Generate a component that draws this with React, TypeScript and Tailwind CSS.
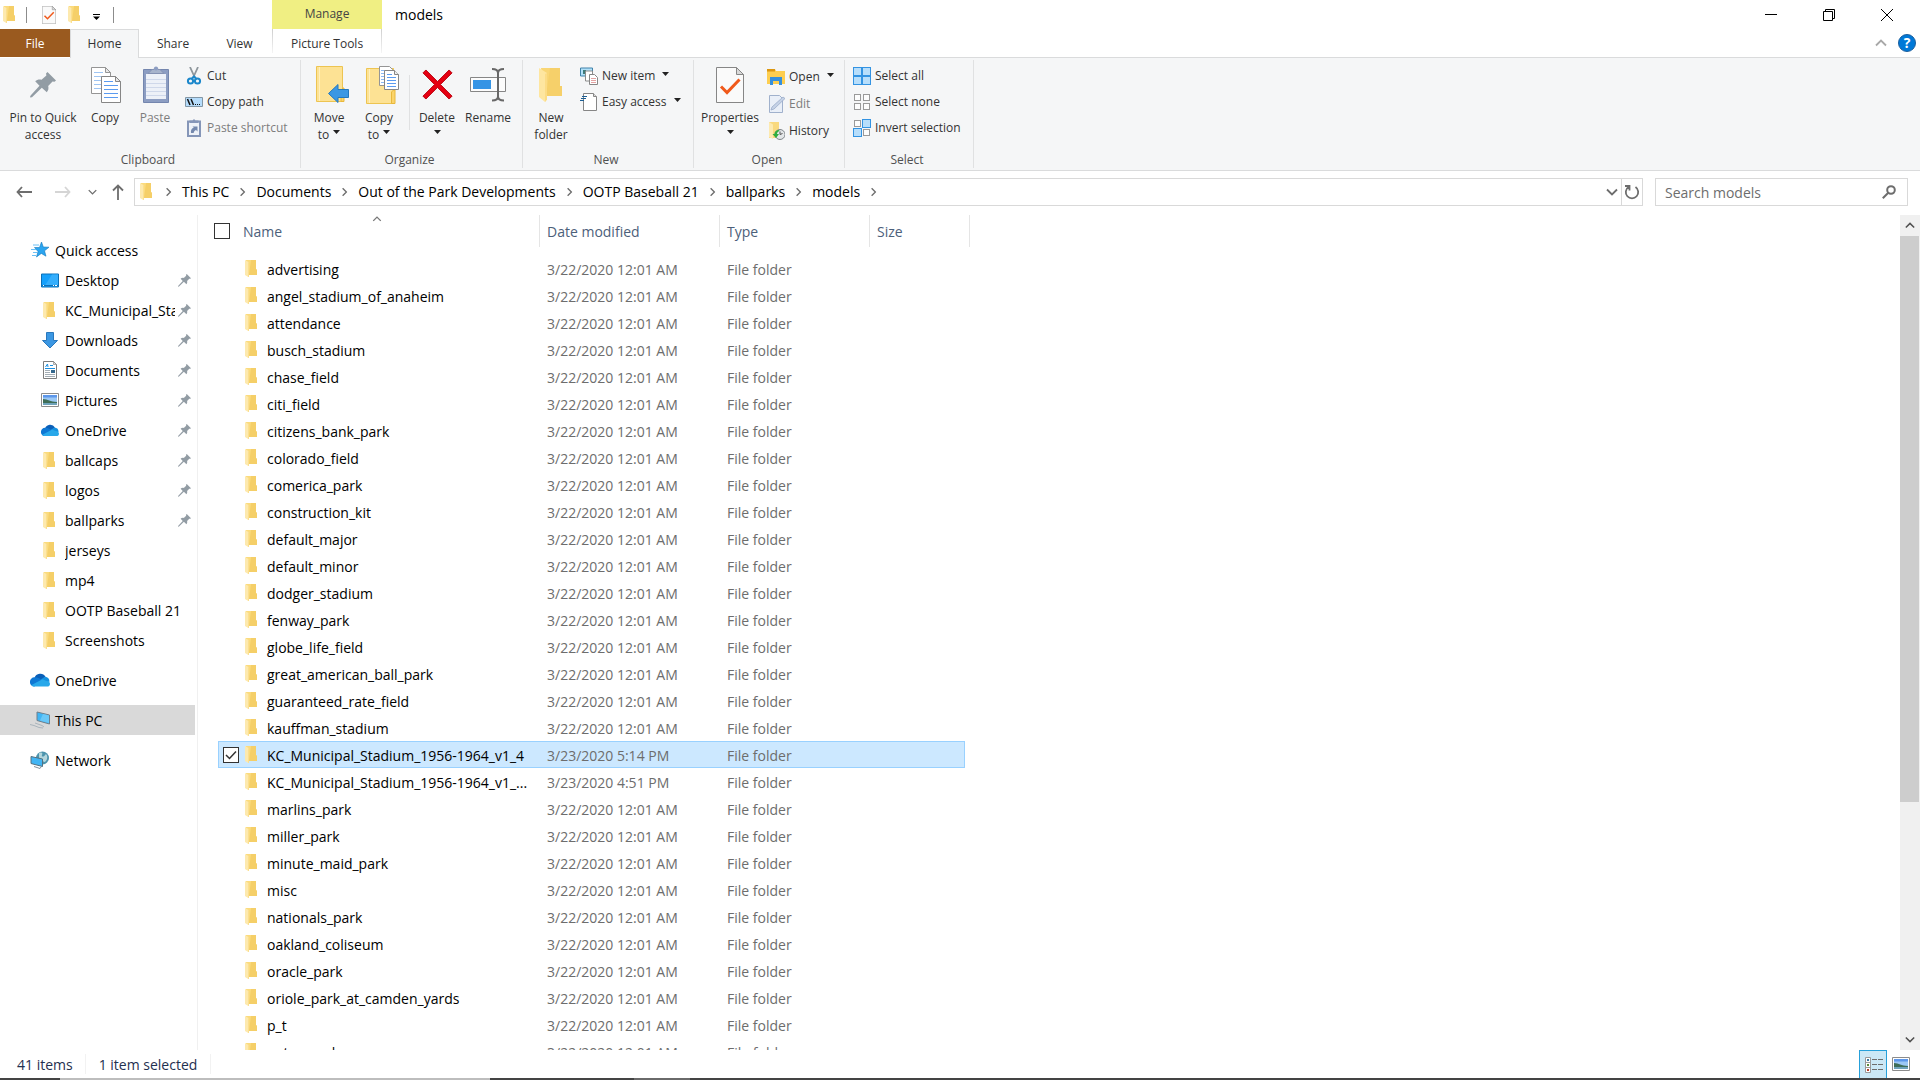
import type { ComponentType, ReactNode } from "react";

type IconProps = { className?: string };

type QuickItem = {
  label: string;
  icon: ComponentType<IconProps>;
  pinned?: boolean;
};

type FileRow = {
  name: string;
  modified: string;
  selected?: boolean;
};

/* ---------- small icons ---------- */

function FolderIcon({ className = "" }: IconProps) {
  return (
    <svg className={`h-[17px] w-3 shrink-0 ${className}`} viewBox="0 0 12 17">
      <path d="M1 0h10v9.5h1V15H1z" fill="#fbdb7d" />
      <path d="M6 0h5v9.5h1V15H4z" fill="#f5cf68" />
      <path d="M0 0l4 2.2V17l-1.2-.3L0 15z" fill="#fde9ae" />
      <path d="M4 2.2V17l-1-.3V2z" fill="#fbdf8f" />
    </svg>
  );
}

function CheckPageIcon({ className = "" }: IconProps) {
  return (
    <svg className={className} viewBox="0 0 28 36">
      <path d="M.5.5h20l7 7v28H.5z" fill="#fafafa" stroke="#868686" />
      <path d="M20.5.5v7h7z" fill="#d9d9d9" stroke="#868686" />
      <path d="M5 19.500l6 6L23.500 12.500" fill="none" stroke="#f0591b" strokeWidth="3" />
    </svg>
  );
}

function PinIcon({ className = "" }: IconProps) {
  return (
    <svg className={className} viewBox="0 0 26 26">
      <path
        d="M17.500 0L26 8.500l-1.500 1.200-2-.2-4.300 4.600c.6 2.600.2 4.400-1.400 6.200l-5-4.600L2 25.200.3 25.600 0 25l.6-1.400L9.500 13.800 5.200 9.300c1.800-1.600 3.900-2.100 6.300-1.500L16.400 3.600 16 1.500z"
        fill="#929ca4"
      />
    </svg>
  );
}

function Caret({ className = "" }: IconProps) {
  return (
    <svg className={`inline-block h-1 w-[7px] shrink-0 ${className}`} viewBox="0 0 7 4">
      <path d="M0 0h7L3.500 4z" fill="#222" />
    </svg>
  );
}

function Chevron({ className = "" }: IconProps) {
  return (
    <svg className={`shrink-0 ${className}`} viewBox="0 0 12 8" fill="none" stroke="currentColor">
      <path d="M1 1.500l5 5 5-5" strokeWidth="1.800" />
    </svg>
  );
}

function StarIcon({ className = "" }: IconProps) {
  return (
    <svg className={className} viewBox="0 0 18 16">
      <path d="M10.500 0l1.800 5 5.700.2-4.500 3.600 1.500 5.400-4.700-2.800L5.500 15l1.500-5.500-3.500-4h5z" fill="#2ba5f0" stroke="#1379bd" strokeWidth=".6" />
      <path d="M2 3h6M0 7.500h5M2 10.500h4M1 13.500h4" stroke="#6cc0f5" />
    </svg>
  );
}

function DesktopIcon({ className = "" }: IconProps) {
  return (
    <svg className={className} viewBox="0 0 18 18">
      <path d="M.5 3h17v13H.5z" fill="#15a0fb" stroke="#0c70b8" />
      <path d="M11 3.500h6v11H4z" fill="#35aefc" />
      <path d="M1 14.500h16" stroke="#0c70b8" />
      <path d="M2 14.500h1m9 0h1m1 0h2" stroke="#fff" />
    </svg>
  );
}

function DownloadIcon({ className = "" }: IconProps) {
  return (
    <svg className={className} viewBox="0 0 18 18">
      <path d="M5.500 1.500h7v8h4L9 17 1.500 9.500h4z" fill="#3b97e3" stroke="#2a78bd" />
    </svg>
  );
}

function DocumentIcon({ className = "" }: IconProps) {
  return (
    <svg className={className} viewBox="0 0 18 18">
      <path d="M2.500.5h10l3 3v14h-13z" fill="#fff" stroke="#7d7d7d" />
      <path d="M12.500.5v3h3z" fill="#ddd" stroke="#7d7d7d" strokeWidth=".6" />
      <path d="M4.500 6L6.500 3 7 6M9 4.500h3M4 7.500h10" fill="none" stroke="#1b8ee0" />
      <path d="M4 9.500h5M4 11.500h5M4 13.500h10M4 15.500h10" stroke="#a3adb5" />
      <path d="M10 9h4v3h-4z" fill="#35688e" />
    </svg>
  );
}

function PictureIcon({ className = "" }: IconProps) {
  return (
    <svg className={className} viewBox="0 0 18 14">
      <path d="M.5.5h17v13H.5z" fill="#fff" stroke="#8c8c8c" />
      <path d="M2 2h14v10H2z" fill="#9cc8f5" />
      <path d="M2 2h14v2.500H2z" fill="#5d97ea" />
      <path d="M2 6c5 .5 7 2.500 14 3v1.500H2z" fill="#3f6e58" />
      <path d="M2 10h14v2H2z" fill="#6fa3bb" />
    </svg>
  );
}

function CloudIcon({ className = "" }: IconProps) {
  return (
    <svg className={className} viewBox="0 0 20 14">
      <path d="M4.500 5A6 6 0 0 1 15.500 3.800L11 8z" fill="#0a5fb8" />
      <path d="M4.500 13.500A4.400 4.400 0 0 1 4.500 4.300C7 4 9 5 12 7z" fill="#0f78d4" />
      <path d="M15 3.800a5 5 0 0 1 4.500 5L12 9.500 11 6.300z" fill="#1490df" />
      <path d="M1.500 12L12.500 6.200c1.700.6 3 1.600 4 1.700 2 0 3.500 1.300 3.500 3s-1.300 2.600-3 2.600H4.500C3.200 13.500 2 13 1.500 12z" fill="#28a8ea" />
    </svg>
  );
}

function ThisPcIcon({ className = "" }: IconProps) {
  return (
    <svg className={className} viewBox="0 0 20 18">
      <path d="M7 1l12.500 3v9L7 9.500z" fill="#41b5f4" stroke="#6f7f8b" />
      <path d="M13 3l6 1.500v7.500L10 9.500z" fill="#69c8f8" />
      <path d="M0 13.500l4 1 5 2M5 12l7 2.500 2 1.500M9 16.500l4 .5" fill="none" stroke="#a9b4bc" />
    </svg>
  );
}

function NetworkIcon({ className = "" }: IconProps) {
  return (
    <svg className={className} viewBox="0 0 20 18">
      <circle cx="12.500" cy="7" r="6.500" fill="#4d94ad" />
      <path d="M9 2c3-1 4 0 3 2s2 2 3 0 3 1 2 4-3 4-4 2-4-1-4-4z" fill="#b4d6dc" />
      <path d="M1 5.500l11.500 2.500v7.500L1 12.500z" fill="#41b5f4" stroke="#54707f" />
      <path d="M4 15.500l6 2 1-1.500" fill="none" stroke="#83919b" />
    </svg>
  );
}

/* ---------- ribbon icons ---------- */

function CopyIcon({ className = "" }: IconProps) {
  return (
    <svg className={className} viewBox="0 0 30 36">
      <path d="M.5.500h14l5 5v21H.5z" fill="#fff" stroke="#959595" />
      <path d="M14.500.5v5h5z" fill="#e8e8e8" stroke="#959595" />
      <path d="M3 5.500h9M3 9.500h13M3 13.500h13M3 17.500h13M3 21.500h13" stroke="#9fc5f3" />
      <path d="M10.500 9.500h14l5 5v21h-19z" fill="#fff" stroke="#868686" />
      <path d="M24.500 9.500v5h5z" fill="#e8e8e8" stroke="#868686" />
      <path d="M13 14.500h9M13 18.500h14M13 22.500h14M13 26.500h14M13 30.500h14" stroke="#5b9bf0" />
    </svg>
  );
}

function PasteIcon({ className = "" }: IconProps) {
  return (
    <svg className={className} viewBox="0 0 26 37">
      <path d="M.5 3.500h25v33H.5z" fill="#8c9dc2" stroke="#7486ae" />
      <path d="M3 8h20v25H3z" fill="#edf1f8" />
      <path d="M3 13.500h20M3 17.500h20M3 21.500h20M3 25.500h20M3 29.500h20" stroke="#cfd8ea" />
      <path d="M5 7.500l4-4h2a2 2 0 0 1 4 0h2l4 4z" fill="#a7b4cc" stroke="#8492b3" />
      <circle cx="13" cy="2.500" r="2" fill="#8c9dc2" />
    </svg>
  );
}

function CutIcon({ className = "" }: IconProps) {
  return (
    <svg className={className} viewBox="0 0 18 18" fill="none">
      <path d="M5 0l5 11M13 0L8 11" stroke="#8e969c" strokeWidth="1.800" />
      <circle cx="5.500" cy="14" r="2.600" stroke="#1b87cb" strokeWidth="2" />
      <circle cx="12.500" cy="14" r="2.600" stroke="#1b87cb" strokeWidth="2" />
      <path d="M7 11.500l2-2 2 2" stroke="#1b87cb" strokeWidth="2" />
    </svg>
  );
}

function CopyPathIcon({ className = "" }: IconProps) {
  return (
    <svg className={className} viewBox="0 0 18 18" fill="none">
      <path d="M.5 4.500h17v9H.5z" fill="#b5dcfb" stroke="#8296a5" />
      <path d="M2.500 6l2.500 6M6 6l2.500 6" stroke="#111" strokeWidth="1.500" />
      <path d="M10 11.500h1m1 0h1m1 0h1" stroke="#111" />
    </svg>
  );
}

function PasteShortcutIcon({ className = "" }: IconProps) {
  return (
    <svg className={className} viewBox="0 0 18 18" fill="none">
      <path d="M3 2.500h12v14.500H3z" fill="#eef2f8" stroke="#8596b8" strokeWidth="2" />
      <path d="M4.500 4V1.500h3L9 0l1.500 1.500h3V4z" fill="#8596b8" />
      <path d="M6 14c-.5-3 .8-4.800 2.800-5.200L7.500 7.500h5v5L11 11c-1.500.5-2.200 1.500-2.300 3z" fill="#7489ae" />
    </svg>
  );
}

function MoveToIcon({ className = "" }: IconProps) {
  return (
    <svg className={className} viewBox="0 0 34 37">
      <path d="M.5.5h26v35H.5z" fill="#fde294" stroke="#edc451" />
      <path d="M3.500 1v34" stroke="#fff0bd" />
      <path d="M25 35.500V24l2-2h1v13.500z" fill="#fbd46b" stroke="#e8b83c" />
      <path d="M12.500 27.500L22 18.500v5h10.500v8H22v5z" fill="#3b97e3" stroke="#2478bd" />
    </svg>
  );
}

function CopyToIcon({ className = "" }: IconProps) {
  return (
    <svg className={className} viewBox="0 0 34 38">
      <path d="M.5 2.500h27v35H.5z" fill="#fde294" stroke="#edc451" />
      <path d="M3.500 3v34" stroke="#fff0bd" />
      <path d="M25.500 37.500V26l2-2h1.500v13.500z" fill="#fbd46b" stroke="#e8b83c" />
      <path d="M13.500.5h10l3 3v16h-13z" fill="#fff" stroke="#959595" />
      <path d="M15 4.500h4M15 7.500h4M15 10.500h4M15 13.500h4M15 16.500h4" stroke="#8bb8f2" />
      <path d="M18.500 4.500h10l4 4v15h-14z" fill="#fff" stroke="#868686" />
      <path d="M28.500 4.500v4h4" fill="#eee" stroke="#868686" />
      <path d="M21 8.500h5M21 11.500h9M21 14.500h9M21 17.500h9M21 20.500h9" stroke="#5b9bf0" />
    </svg>
  );
}

function DeleteIcon({ className = "" }: IconProps) {
  return (
    <svg className={className} viewBox="0 0 32 32">
      <path
        d="M1 4l3-3 12 12L28 1l3 3-12 12 12 12-3 3-12-12L4 31l-3-3 12-12z"
        fill="#e60012"
        stroke="#b8000d"
      />
    </svg>
  );
}

function RenameIcon({ className = "" }: IconProps) {
  return (
    <svg className={className} viewBox="0 0 36 34" fill="none">
      <path d="M.5 9.500h35v14H.5z" fill="#fcfcfc" stroke="#868686" />
      <path d="M3 12h18v9H3z" fill="#3594e5" />
      <path d="M28 4v26" stroke="#686868" strokeWidth="2" />
      <path d="M22 1c4 0 6 1 6 4 0-3 2-4 6-4M22 32.500c4 0 6-1 6-4 0 3 2 4 6 4" stroke="#686868" strokeWidth="2" />
    </svg>
  );
}

function NewFolderIcon({ className = "" }: IconProps) {
  return (
    <svg className={className} viewBox="0 0 26 36">
      <path d="M3 1h19v18h2v10H6z" fill="#f9d675" />
      <path d="M12 1h10v18h2v10H8z" fill="#f6d06a" />
      <path d="M1 1l8 5v26.500L7 35l-6-5z" fill="#fee6a0" />
      <path d="M9 6v26.500L7 35V7z" fill="#fcdc86" />
    </svg>
  );
}

function NewItemIcon({ className = "" }: IconProps) {
  return (
    <svg className={className} viewBox="0 0 18 18">
      <path d="M.5 1h12v8H.5z" fill="#b2e1f9" stroke="#4183ab" />
      <path d="M3 3h3v4H3z" fill="#3e7c7a" />
      <path d="M5.500 4h7v10h-7z" fill="#fff" stroke="#8b8b8b" />
      <path d="M9.500 7.500h5l3 3v7h-8z" fill="#fff" stroke="#868686" />
      <path d="M11 11.500h5M11 13.500h5M11 15.500h5" stroke="#e3a3a3" />
    </svg>
  );
}

function EasyAccessIcon({ className = "" }: IconProps) {
  return (
    <svg className={className} viewBox="0 0 18 18">
      <path d="M3.500.5h10l3 3v14h-13z" fill="#fff" stroke="#868686" />
      <path d="M13.500.5v3h3" fill="#ddd" stroke="#868686" />
      <path d="M2 3.500h5M1 5.500h5M0 7.500h4" stroke="#1d5f94" strokeWidth="1.200" />
    </svg>
  );
}

function OpenIcon({ className = "" }: IconProps) {
  return (
    <svg className={className} viewBox="0 0 18 18">
      <path d="M0 1h8l1 2h9v13H0z" fill="#fdce50" />
      <path d="M0 1h8v2.500H0z" fill="#dc9711" />
      <path d="M3 17V9h12v8h-3v-4H6v4z" fill="#358fdc" />
    </svg>
  );
}

function EditIcon({ className = "" }: IconProps) {
  return (
    <svg className={className} viewBox="0 0 18 18">
      <path d="M2.500.5h10l3 3v14h-13z" fill="#e9eff8" stroke="#a0b1cc" />
      <path d="M4 15l1-3L16 2l2 1.500L7 14z" fill="#c5d2e6" stroke="#9aacca" strokeWidth=".8" />
    </svg>
  );
}

function HistoryIcon({ className = "" }: IconProps) {
  return (
    <svg className={className} viewBox="0 0 18 18">
      <path d="M2 0h10v16H2z" fill="#f9d97f" />
      <path d="M2 0l4 2.500V17l-4-2z" fill="#fdeab0" />
      <circle cx="13" cy="12.500" r="5" fill="#e3e6e8" stroke="#7f8589" />
      <path d="M13 9.500v3l2.500-1" fill="none" stroke="#555" />
      <path d="M12 8c-3 0-4.500 2-4.500 4H5.500l3.500 4 3-4h-2c0-1.500 1-2.500 2.500-3z" fill="#2fae3f" />
    </svg>
  );
}

function Tile({ x, y, on }: { x: number; y: number; on: boolean }) {
  return on ? (
    <rect x={x - 0.5} y={y - 0.5} width="8" height="8" fill="#b7defb" stroke="#3393e2" />
  ) : (
    <rect x={x + 0.5} y={y + 0.5} width="6" height="6" fill="#fdfdfd" stroke="#9a9a9a" />
  );
}

function TilesIcon({ on, className = "" }: IconProps & { on: boolean[] }) {
  return (
    <svg className={className} viewBox="0 0 18 18">
      <Tile x={1} y={1} on={on[0]} />
      <Tile x={10} y={1} on={on[1]} />
      <Tile x={1} y={10} on={on[2]} />
      <Tile x={10} y={10} on={on[3]} />
    </svg>
  );
}

const SelectAllIcon = (props: IconProps) => <TilesIcon {...props} on={[true, true, true, true]} />;
const SelectNoneIcon = (props: IconProps) => <TilesIcon {...props} on={[false, false, false, false]} />;
const InvertIcon = (props: IconProps) => <TilesIcon {...props} on={[false, true, true, false]} />;

/* ---------- data ---------- */

const quickItems: QuickItem[] = [
  { label: "Desktop", icon: DesktopIcon, pinned: true },
  { label: "KC_Municipal_Stadium", icon: FolderIcon, pinned: true },
  { label: "Downloads", icon: DownloadIcon, pinned: true },
  { label: "Documents", icon: DocumentIcon, pinned: true },
  { label: "Pictures", icon: PictureIcon, pinned: true },
  { label: "OneDrive", icon: CloudIcon, pinned: true },
  { label: "ballcaps", icon: FolderIcon, pinned: true },
  { label: "logos", icon: FolderIcon, pinned: true },
  { label: "ballparks", icon: FolderIcon, pinned: true },
  { label: "jerseys", icon: FolderIcon },
  { label: "mp4", icon: FolderIcon },
  { label: "OOTP Baseball 21", icon: FolderIcon },
  { label: "Screenshots", icon: FolderIcon },
];

const crumbs = ["This PC", "Documents", "Out of the Park Developments", "OOTP Baseball 21", "ballparks", "models"];

const midnight = "3/22/2020 12:01 AM";

const files: FileRow[] = [
  { name: "advertising", modified: midnight },
  { name: "angel_stadium_of_anaheim", modified: midnight },
  { name: "attendance", modified: midnight },
  { name: "busch_stadium", modified: midnight },
  { name: "chase_field", modified: midnight },
  { name: "citi_field", modified: midnight },
  { name: "citizens_bank_park", modified: midnight },
  { name: "colorado_field", modified: midnight },
  { name: "comerica_park", modified: midnight },
  { name: "construction_kit", modified: midnight },
  { name: "default_major", modified: midnight },
  { name: "default_minor", modified: midnight },
  { name: "dodger_stadium", modified: midnight },
  { name: "fenway_park", modified: midnight },
  { name: "globe_life_field", modified: midnight },
  { name: "great_american_ball_park", modified: midnight },
  { name: "guaranteed_rate_field", modified: midnight },
  { name: "kauffman_stadium", modified: midnight },
  { name: "KC_Municipal_Stadium_1956-1964_v1_4", modified: "3/23/2020 5:14 PM", selected: true },
  { name: "KC_Municipal_Stadium_1956-1964_v1_...", modified: "3/23/2020 4:51 PM" },
  { name: "marlins_park", modified: midnight },
  { name: "miller_park", modified: midnight },
  { name: "minute_maid_park", modified: midnight },
  { name: "misc", modified: midnight },
  { name: "nationals_park", modified: midnight },
  { name: "oakland_coliseum", modified: midnight },
  { name: "oracle_park", modified: midnight },
  { name: "oriole_park_at_camden_yards", modified: midnight },
  { name: "p_t", modified: midnight },
  { name: "petco_park", modified: midnight },
];

/* ---------- title bar and ribbon ---------- */

function TitleBar() {
  return (
    <header className="flex h-[29px] items-stretch">
      <div className="flex w-[272px] items-center pl-[3px]">
        <FolderIcon />
        <span className="ml-[11px] h-4 w-px bg-[#8c8c8c]" />
        <button aria-label="Properties" className="ml-[15px]">
          <CheckPageIcon className="h-[18px] w-[14px]" />
        </button>
        <button aria-label="New folder" className="ml-3">
          <FolderIcon />
        </button>
        <button aria-label="Customize Quick Access Toolbar" className="ml-[13px] mt-1">
          <svg className="h-[6px] w-[7px]" viewBox="0 0 7 6">
            <path d="M0 0h7v1H0zM0 2.500h7L3.500 6z" fill="#000" />
          </svg>
        </button>
        <span className="ml-[13px] h-4 w-px bg-[#8c8c8c]" />
      </div>
      <div className="flex w-[110px] items-center justify-center bg-[#f0ef83] pb-px text-[12px] text-[#444]">Manage</div>
      <h1 className="flex flex-1 items-center pl-[13px] text-[14px] text-black">models</h1>
      <div className="flex items-center gap-[46px] pr-[27px]">
        <button aria-label="Minimize">
          <svg className="size-3" viewBox="0 0 12 12">
            <path d="M0 5.500h12" stroke="#000" />
          </svg>
        </button>
        <button aria-label="Restore">
          <svg className="size-3" viewBox="0 0 12 12" fill="none" stroke="#000">
            <path d="M.5 2.500h9v9h-9zM2.500 2.500v-2h9v9h-2" />
          </svg>
        </button>
        <button aria-label="Close">
          <svg className="size-3" viewBox="0 0 12 12">
            <path d="M0 0l12 12M12 0L0 12" stroke="#000" />
          </svg>
        </button>
      </div>
    </header>
  );
}

function RibbonTabs() {
  return (
    <nav className="flex h-[29px] text-[12px] text-[#333]">
      <button className="mb-px w-[70px] bg-[#9a5a1f] pt-px text-white">File</button>
      <button className="w-[69px] border border-b-0 border-[#dadbdc] bg-[#f5f6f7]">Home</button>
      <button className="w-[68px] border-b border-[#dadbdc] pt-[2px]">Share</button>
      <button className="w-[65px] border-b border-[#dadbdc] pt-[2px]">View</button>
      <div className="flex w-[110px] border-b border-[#dadbdc]">
        <span className="mb-1 w-px bg-linear-to-b from-[#cfcfcf] to-[#f4f4f4]" />
        <button className="flex-1 pt-[2px]">Picture Tools</button>
        <span className="mb-1 w-px bg-linear-to-b from-[#cfcfcf] to-[#f4f4f4]" />
      </div>
      <div className="flex flex-1 items-center justify-end gap-[11px] border-b border-[#dadbdc] pr-1">
        <button aria-label="Collapse ribbon" className="text-[#a8a8a8]">
          <Chevron className="h-2 w-3 rotate-180" />
        </button>
        <button
          aria-label="Help"
          className="flex size-[18px] items-center justify-center rounded-full border border-[#1b5f9e] bg-[#0078d7] text-[14px] leading-none font-bold text-white"
        >
          ?
        </button>
      </div>
    </nav>
  );
}

function RibbonGroup({ title, className = "", children }: { title: string; className?: string; children: ReactNode }) {
  return (
    <section className={`my-[2px] flex flex-col border-r border-[#e0e1e2] ${className}`}>
      <div className="flex flex-1 items-start">{children}</div>
      <h2 className="h-4 pr-1 text-center leading-4 text-[#505050]">{title}</h2>
    </section>
  );
}

function LargeButton({
  icon,
  lines,
  caret,
  disabled,
  className = "",
}: {
  icon: ReactNode;
  lines: string[];
  caret?: boolean;
  disabled?: boolean;
  className?: string;
}) {
  return (
    <button disabled={disabled} className={`flex flex-col items-center ${disabled ? "text-[#7d7d7d]" : ""} ${className}`}>
      <span className="flex h-[49px] items-center justify-center">{icon}</span>
      <span className="leading-[17px] whitespace-nowrap">{lines[0]}</span>
      <span className="flex h-[17px] items-center gap-1 leading-[17px]">
        {lines[1]}
        {caret && <Caret className="-mt-[5px]" />}
      </span>
    </button>
  );
}

function SmallButton({
  icon: Icon,
  label,
  caret,
  disabled,
}: {
  icon: ComponentType<IconProps>;
  label: string;
  caret?: boolean;
  disabled?: boolean;
}) {
  return (
    <button
      disabled={disabled}
      className={`flex h-[26px] items-center gap-1 whitespace-nowrap ${disabled ? "text-[#7d7d7d]" : ""}`}
    >
      <Icon className="size-[18px]" />
      {label}
      {caret && <Caret className="-mt-1 ml-[3px]" />}
    </button>
  );
}

function Ribbon() {
  return (
    <div className="flex h-[113px] border-b border-[#dadbdc] bg-[#f5f6f7] text-[12px] text-[#333]">
      <RibbonGroup title="Clipboard" className="w-[301px]">
        <LargeButton className="ml-[6px] w-[74px]" icon={<PinIcon className="size-[26px]" />} lines={["Pin to Quick", "access"]} />
        <LargeButton className="w-[50px]" icon={<CopyIcon className="ml-px h-9 w-[30px]" />} lines={["Copy"]} />
        <LargeButton className="w-[50px]" disabled icon={<PasteIcon className="ml-px h-[37px] w-[26px]" />} lines={["Paste"]} />
        <div className="mt-[3px] ml-[5px]">
          <SmallButton icon={CutIcon} label="Cut" />
          <SmallButton icon={CopyPathIcon} label="Copy path" />
          <SmallButton icon={PasteShortcutIcon} label="Paste shortcut" disabled />
        </div>
      </RibbonGroup>
      <RibbonGroup title="Organize" className="w-[222px]">
        <LargeButton className="ml-[3px] w-[50px]" caret icon={<MoveToIcon className="ml-2 h-[37px] w-[34px]" />} lines={["Move", "to"]} />
        <LargeButton className="w-[50px]" caret icon={<CopyToIcon className="ml-2 h-[38px] w-[34px]" />} lines={["Copy", "to"]} />
        <span className="mt-[15px] mr-[2px] ml-[5px] h-[55px] w-px bg-[#e0e1e2]" />
        <LargeButton className="w-[50px]" caret icon={<DeleteIcon className="size-[31px]" />} lines={["Delete", ""]} />
        <LargeButton className="w-[52px]" icon={<RenameIcon className="h-[34px] w-9" />} lines={["Rename"]} />
      </RibbonGroup>
      <RibbonGroup title="New" className="w-[171px]">
        <LargeButton className="ml-[3px] w-[50px]" icon={<NewFolderIcon className="h-9 w-[26px]" />} lines={["New", "folder"]} />
        <div className="mt-[3px] ml-1">
          <SmallButton icon={NewItemIcon} label="New item" caret />
          <SmallButton icon={EasyAccessIcon} label="Easy access" caret />
        </div>
      </RibbonGroup>
      <RibbonGroup title="Open" className="w-[151px]">
        <LargeButton className="ml-[3px] w-[66px]" caret icon={<CheckPageIcon className="h-9 w-7" />} lines={["Properties", ""]} />
        <div className="mt-1 ml-1 flex flex-col gap-px">
          <SmallButton icon={OpenIcon} label="Open" caret />
          <SmallButton icon={EditIcon} label="Edit" disabled />
          <SmallButton icon={HistoryIcon} label="History" />
        </div>
      </RibbonGroup>
      <RibbonGroup title="Select" className="w-[129px]">
        <div className="mt-[3px] ml-2">
          <SmallButton icon={SelectAllIcon} label="Select all" />
          <SmallButton icon={SelectNoneIcon} label="Select none" />
          <SmallButton icon={InvertIcon} label="Invert selection" />
        </div>
      </RibbonGroup>
    </div>
  );
}

/* ---------- address bar ---------- */

function AddressBar() {
  return (
    <div className="flex h-11 items-center pr-3 pb-[2px] text-[#6d6d6d]">
      <div className="flex w-[134px] items-center pl-4">
        <button aria-label="Back">
          <svg className="h-3 w-4" viewBox="0 0 16 12" fill="none" stroke="currentColor" strokeWidth="1.800">
            <path d="M16 6H1.500M6 1L1.500 6 6 11" />
          </svg>
        </button>
        <button aria-label="Forward" disabled className="ml-[23px] text-[#d5d5d5]">
          <svg className="h-3 w-4" viewBox="0 0 16 12" fill="none" stroke="currentColor" strokeWidth="1.800">
            <path d="M0 6h14.500M10 1l4.500 5L10 11" />
          </svg>
        </button>
        <button aria-label="Recent locations" className="ml-[17px]">
          <Chevron className="h-[6px] w-[9px]" />
        </button>
        <button aria-label="Up" className="ml-[15px]">
          <svg className="h-4 w-3" viewBox="0 0 12 16" fill="none" stroke="currentColor" strokeWidth="1.800">
            <path d="M6 16V1.500M1 6.500l5-5 5 5" />
          </svg>
        </button>
      </div>
      <div className="flex h-7 flex-1 items-stretch border border-[#d9d9d9]">
        <div className="flex flex-1 items-center pb-px pl-[5px]">
          <FolderIcon />
          <Chevron className="ml-3 h-[6px] w-[9px] -rotate-90" />
          {crumbs.map((crumb) => (
            <div key={crumb} className="flex items-center">
              <button className="ml-[9px] text-[14px] whitespace-nowrap text-black">{crumb}</button>
              <Chevron className="ml-[9px] h-[6px] w-[9px] -rotate-90" />
            </div>
          ))}
        </div>
        <button aria-label="Previous locations" className="px-[3px]">
          <Chevron className="h-2 w-3" />
        </button>
        <button aria-label="Refresh" className="flex w-[21px] items-center justify-center border-l border-[#d9d9d9]">
          <svg className="size-4" viewBox="0 0 16 16" fill="none" stroke="currentColor" strokeWidth="1.800">
            <path d="M11.500 3A6.200 6.200 0 1 1 4.500 3M1 2h4.500v4.500" />
          </svg>
        </button>
      </div>
      <label className="ml-3 flex h-7 w-[253px] items-center border border-[#d9d9d9] pr-[11px] pl-[9px]">
        <input
          type="text"
          aria-label="Search models"
          placeholder="Search models"
          className="min-w-0 flex-1 text-[14px] text-black outline-none placeholder:text-[#6d6d6d]"
        />
        <svg className="size-[14px]" viewBox="0 0 14 14" fill="none" stroke="currentColor" strokeWidth="2">
          <circle cx="9" cy="5" r="3.800" />
          <path d="M6.500 7.500L.8 13.200" />
        </svg>
      </label>
    </div>
  );
}

/* ---------- panes ---------- */

function RootLink({ icon, label, active }: { icon: ReactNode; label: string; active?: boolean }) {
  return (
    <a href="#" className={`mr-[2px] flex h-[30px] items-center pl-[30px] text-black ${active ? "bg-[#d9d9d9]" : ""}`}>
      <span className="flex w-5 justify-center">{icon}</span>
      <span className="ml-[5px]">{label}</span>
    </a>
  );
}

function NavigationPane() {
  return (
    <nav className="w-[198px] shrink-0 border-r border-[#f0f0f0] pt-5 text-[14px]">
      <RootLink icon={<StarIcon className="h-4 w-[18px]" />} label="Quick access" />
      <ul>
        {quickItems.map(({ label, icon: Icon, pinned }) => (
          <li key={label}>
            <a href="#" className="flex h-[30px] items-center pr-[6px] pl-10 text-black">
              <span className="flex w-5 shrink-0 justify-center">
                {Icon === FolderIcon ? <Icon className="-ml-[3px]" /> : <Icon className="w-[18px]" />}
              </span>
              <span className="ml-[5px] flex-1 overflow-hidden whitespace-nowrap">{label}</span>
              {pinned && <PinIcon className="ml-[3px] size-[13px] shrink-0" />}
            </a>
          </li>
        ))}
      </ul>
      <div className="mt-[10px] flex flex-col gap-[10px]">
        <RootLink icon={<CloudIcon className="w-5" />} label="OneDrive" />
        <RootLink icon={<ThisPcIcon className="w-5" />} label="This PC" active />
        <RootLink icon={<NetworkIcon className="w-5" />} label="Network" />
      </div>
    </nav>
  );
}

function CheckBox({ label, checked, className = "" }: { label: string; checked?: boolean; className?: string }) {
  return (
    <span className={`relative inline-flex size-4 shrink-0 ${className}`}>
      <input
        type="checkbox"
        aria-label={label}
        defaultChecked={checked}
        className="peer size-4 appearance-none border border-[#333] bg-white"
      />
      <svg
        className="pointer-events-none absolute inset-0 hidden size-4 peer-checked:block"
        viewBox="0 0 16 16"
        fill="none"
        stroke="#333"
        strokeWidth="1.500"
      >
        <path d="M3 8l3.500 3.500L13 4.500" />
      </svg>
    </span>
  );
}

function ColumnHeader({ label, className = "" }: { label: string; className?: string }) {
  return (
    <th className="h-10 p-0 align-top font-normal">
      <div className={`flex h-8 items-center border-r border-[#e5e5e5] pl-[7px] ${className}`}>{label}</div>
    </th>
  );
}

function FileTable() {
  return (
    <div className="min-w-0 flex-1 overflow-hidden pl-5">
      <table className="w-[747px] table-fixed border-collapse text-left text-[14px]">
        <colgroup>
          <col className="w-[322px]" />
          <col className="w-[180px]" />
          <col className="w-[150px]" />
          <col className="w-[95px]" />
        </colgroup>
        <thead className="text-[#4c607a]">
          <tr>
            <th className="h-10 p-0 align-top font-normal">
              <div className="relative -ml-1 flex h-8 items-center border-r border-[#e5e5e5]">
                <CheckBox label="Select all items" />
                <span className="ml-[13px]">Name</span>
                <Chevron className="absolute top-px left-1/2 h-[6px] w-[10px] -translate-x-1/2 rotate-180 text-[#777]" />
              </div>
            </th>
            <ColumnHeader label="Date modified" />
            <ColumnHeader label="Type" />
            <ColumnHeader label="Size" className="-mr-[5px]" />
          </tr>
        </thead>
        <tbody className="text-[#6d6d6d]">
          {files.map((file) => (
            <tr
              key={file.name}
              className={file.selected ? "bg-[#cce8ff] outline-1 -outline-offset-1 outline-[#99d1ff]" : ""}
            >
              <td className="h-[27px] p-0">
                <div className={`flex items-center ${file.selected ? "pl-[5px]" : "pl-[27px]"}`}>
                  {file.selected && <CheckBox label={`Select ${file.name}`} checked className="mr-[6px]" />}
                  <FolderIcon />
                  <span className="ml-[10px] pt-[2px] whitespace-nowrap text-black">{file.name}</span>
                </div>
              </td>
              <td className="p-0 pt-[2px] pl-[7px]">{file.modified}</td>
              <td className="p-0 pt-[2px] pl-[7px]">File folder</td>
              <td className="p-0" />
            </tr>
          ))}
        </tbody>
      </table>
    </div>
  );
}

function ScrollBar() {
  return (
    <div className="flex w-5 shrink-0 flex-col bg-[#f0f0f0] text-[#505050]">
      <button aria-label="Scroll up" className="flex h-[21px] shrink-0 items-center justify-center">
        <Chevron className="h-[7px] w-[10px] rotate-180" />
      </button>
      <div className="flex-1">
        <div className="mr-px h-5/7 bg-[#cdcdcd]" />
      </div>
      <button aria-label="Scroll down" className="flex h-[21px] shrink-0 items-center justify-center">
        <Chevron className="h-[7px] w-[10px]" />
      </button>
    </div>
  );
}

function StatusBar() {
  return (
    <footer className="flex h-7 shrink-0 items-stretch text-[14px] text-[#1f3050]">
      <div className="my-1 flex items-center border-r border-[#f2f2f2] pr-3 pl-[17px]">41 items</div>
      <div className="my-1 flex items-center border-r border-[#f2f2f2] px-[13px]">1 item selected</div>
      <div className="ml-auto flex items-center pr-[5px]">
        <button
          aria-label="Details view"
          className="flex h-7 w-7 items-center justify-center border border-b-0 border-[#26a0da] bg-[#cbe8f6] pt-px pl-px"
        >
          <svg className="h-4 w-[18px]" viewBox="0 0 18 16" fill="none">
            <path d="M.5.5h5v15h-5zM.5 5.500h5M.5 10.500h5" fill="#fff" stroke="#9a9a9a" />
            <path d="M2 3h2" stroke="#3c79a0" strokeWidth="2" />
            <path d="M2 8h2" stroke="#5c8a3a" strokeWidth="2" />
            <path d="M2 13h2" stroke="#b8402a" strokeWidth="2" />
            <path d="M7 2.500h5m1 0h5M7 7.500h5m1 0h5M7 12.500h5m1 0h5" stroke="#6d6d6d" />
          </svg>
        </button>
        <button aria-label="Large icons view" className="flex h-7 w-7 items-center justify-center">
          <PictureIcon className="h-[14px] w-[18px]" />
        </button>
      </div>
    </footer>
  );
}

export default function App() {
  return (
    <div className="flex h-screen flex-col overflow-hidden bg-white font-['Open_Sans','Noto_Sans',sans-serif]">
      <TitleBar />
      <RibbonTabs />
      <Ribbon />
      <AddressBar />
      <main className="flex min-h-0 flex-1">
        <NavigationPane />
        <FileTable />
        <ScrollBar />
      </main>
      <StatusBar />
      {/* top edge of the taskbar */}
      <div className="flex h-[2px] shrink-0 bg-[#444]">
        <span className="ml-[60px] w-[430px] bg-[#bdbdbd]" />
        <span className="ml-36 w-14 bg-[#6a6a6a]" />
      </div>
    </div>
  );
}
